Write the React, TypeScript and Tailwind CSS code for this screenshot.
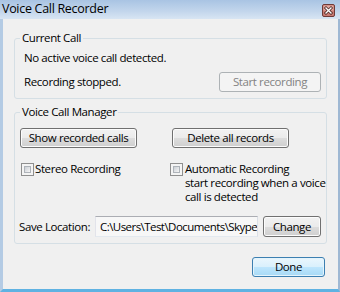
import React from "react";

const font = "font-['Open_Sans',_'Noto_Sans',_sans-serif]";

function VistaButton({
  children,
  className = "",
  variant = "normal",
}: {
  children: React.ReactNode;
  className?: string;
  variant?: "normal" | "disabled" | "default";
}) {
  const styles =
    variant === "disabled"
      ? "border-[#adb2b5] bg-[#f4f4f4] text-[#838383]"
      : variant === "default"
      ? "border-[#3c7fb1] bg-[linear-gradient(to_bottom,#eaf6fd_0%,#d9f0fc_50%,#bee6fd_50%,#a7d9f5_100%)] text-black shadow-[inset_0_0_0_1px_#e4f4fc]"
      : "border-[#707070] bg-[linear-gradient(to_bottom,#f2f2f2_0%,#ebebeb_50%,#dddddd_50%,#cfcfcf_100%)] text-black shadow-[inset_0_0_0_1px_#fcfcfc]";
  return (
    <div
      className={`flex items-center justify-center shrink-0 rounded-[3px] border leading-none ${styles} ${className}`}
    >
      {children}
    </div>
  );
}

function Checkbox() {
  return (
    <div className="w-[13px] h-[13px] shrink-0 border border-[#8f8f8f] bg-[#f4f4f4] p-[2px]">
      <div className="w-full h-full border border-[#aeb3b9] bg-[linear-gradient(135deg,#cbcfd5_0%,#f6f6f6_100%)]" />
    </div>
  );
}

export default function App() {
  return (
    <div className={`w-[340px] h-[292px] flex flex-col ${font} text-[11.5px] tracking-[-0.4px] text-black`}>
      {/* Title bar */}
      <div className="h-[19px] shrink-0 flex items-center justify-between pl-[2px] pr-[5px] bg-[linear-gradient(to_bottom,#a9c4e3_0%,#c3d6ec_60%,#d8e5f3_100%)]">
        <span className="leading-none mt-[-1px] text-[12.5px] tracking-[-0.3px]">Voice Call Recorder</span>
        <svg width="13" height="13" viewBox="0 0 13 13" className="mt-[1px]">
          <rect x="0.5" y="0.5" width="12" height="12" rx="1.5" fill="#c97a72" stroke="#6e3a37" />
          <rect x="1.5" y="1.5" width="10" height="5" fill="#e2a9a1" />
          <path d="M4 4 L9 9 M9 4 L4 9" stroke="#4a2220" strokeWidth="3" strokeLinecap="square" />
          <path d="M4 4 L9 9 M9 4 L4 9" stroke="#ffffff" strokeWidth="1.4" strokeLinecap="square" />
        </svg>
      </div>

      {/* Client area */}
      <div className="flex-1 flex flex-col bg-[#f0f0f0] border-l-[3px] border-r-[2px] border-b-[3px] border-l-[#b4cbe4] border-r-[#9fb8d3] border-b-[#5fb2e2] pl-[11px] pr-[11px] pt-[12px]">
        {/* Current Call */}
        <fieldset className="min-w-0 border border-[#d5dfe5] rounded-[3px] pl-[9px] pr-[5px] pb-[6px] pt-[6px] m-0">
          <legend className="ml-[-4px] px-[2px] leading-[14px]">Current Call</legend>
          <div className="leading-[14px]">No active voice call detected.</div>
          <div className="flex items-center justify-between mt-[7px]">
            <span className="leading-[14px]">Recording stopped.</span>
            <VistaButton variant="disabled" className="w-[102px] h-[20px]">
              Start recording
            </VistaButton>
          </div>
        </fieldset>

        {/* Voice Call Manager */}
        <fieldset className="min-w-0 border border-[#d5dfe5] rounded-[3px] pl-[5px] pr-[5px] pb-[6px] pt-[9px] mt-[6px]">
          <legend className="ml-[0px] px-[2px] leading-[14px]">Voice Call Manager</legend>
          <div className="flex items-center">
            <VistaButton className="w-[117px] h-[20px]">Show recorded calls</VistaButton>
            <VistaButton className="w-[117px] h-[20px] ml-[35px]">Delete all records</VistaButton>
          </div>
          <div className="flex items-start mt-[14px]">
            <div className="flex items-start w-[150px] shrink-0 pl-[1px]">
              <div className="mt-[1px]">
                <Checkbox />
              </div>
              <span className="ml-[1px] leading-[14px] whitespace-nowrap">Stereo Recording</span>
            </div>
            <div className="flex items-start">
              <div className="mt-[1px]">
                <Checkbox />
              </div>
              <span className="ml-[2px] leading-[14px] whitespace-nowrap">
                Automatic Recording
                <br />
                start recording when a voice
                <br />
                call is detected
              </span>
            </div>
          </div>
          <div className="flex items-center mt-[12px]">
            <span className="leading-[14px] w-[76px] shrink-0 -ml-[1px] whitespace-nowrap">Save Location:</span>
            <div className="w-[163px] h-[21px] shrink-0 border border-[#abadb3] border-b-[#e3e9ef] border-l-[#e2e3ea] border-r-[#dbdfe6] bg-[#f7f7f7] flex items-center pl-[4px] overflow-hidden whitespace-nowrap tracking-[-0.55px]">
              C:\Users\Test\Documents\Skype
            </div>
            <VistaButton className="w-[58px] h-[21px] ml-[5px]">Change</VistaButton>
          </div>
        </fieldset>

        <div className="flex justify-end mt-[13px] pr-[2px]">
          <VistaButton variant="default" className="w-[73px] h-[20px]">
            Done
          </VistaButton>
        </div>
      </div>
    </div>
  );
}
